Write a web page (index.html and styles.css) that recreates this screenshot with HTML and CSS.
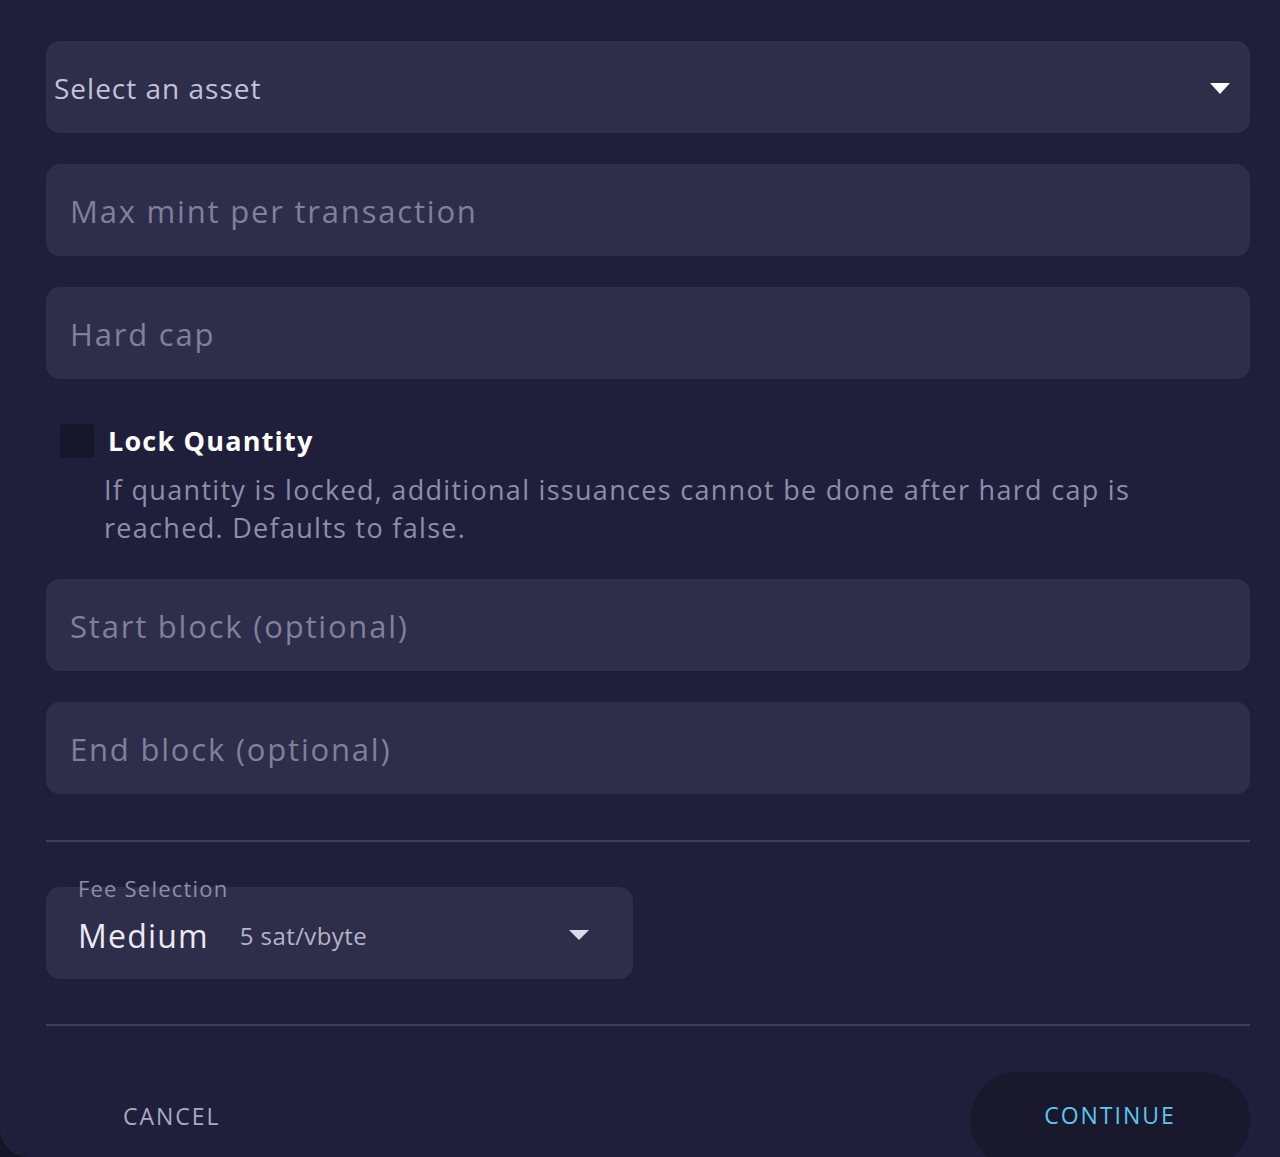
FILE: index.html
```html
<!DOCTYPE html>
<html>
<head>
<meta charset="utf-8">
<link rel="stylesheet" href="styles.css">
</head>
<body>
<div class="dialog">
  <div class="field select">
    <span class="select-text">Select an asset</span>
    <span class="caret"></span>
  </div>
  <div class="field"><span class="placeholder">Max mint per transaction</span></div>
  <div class="field"><span class="placeholder">Hard cap</span></div>
  <div class="lock">
    <div class="lock-row">
      <span class="checkbox"></span>
      <span class="lock-label">Lock Quantity</span>
    </div>
    <p class="lock-desc">If quantity is locked, additional issuances cannot be done after hard cap is reached. Defaults to false.</p>
  </div>
  <div class="field f4"><span class="placeholder">Start block (optional)</span></div>
  <div class="field"><span class="placeholder">End block (optional)</span></div>
  <hr class="divider first">
  <div class="fee">
    <span class="fee-label">Fee Selection</span>
    <div class="fee-box">
      <span class="fee-name">Medium</span>
      <span class="fee-rate">5 sat/vbyte</span>
      <span class="caret small"></span>
    </div>
  </div>
  <hr class="divider second">
  <div class="actions">
    <button class="btn cancel">CANCEL</button>
    <button class="btn continue">CONTINUE</button>
  </div>
</div>
</body>
</html>
```
FILE: styles.css
```css
html, body {
  margin: 0;
  padding: 0;
  background: #151428;
  height: 1157px;
  overflow: hidden;
}
.dialog {
  background: #201f3b;
  height: 1157px;
  box-sizing: border-box;
  padding: 41px 30px 0 46px;
  border-radius: 0 0 0 28px;
  font-family: "Open Sans", "Liberation Sans", sans-serif;
  display: flex;
  flex-direction: column;
}
.dialog > * {
  flex-shrink: 0;
}
.field {
  height: 92px;
  background: #2e2d4a;
  border-radius: 14px;
  display: flex;
  align-items: center;
  padding: 2px 24px 0;
  margin-bottom: 31px;
  box-sizing: border-box;
}
.field.select {
  padding: 2px 20px 0 8px;
  justify-content: space-between;
}
.select-text {
  color: #c3c2d8;
  font-size: 28px;
  letter-spacing: 1px;
}
.placeholder {
  color: #807f9c;
  font-size: 31px;
  letter-spacing: 1.8px;
}
.caret {
  width: 0;
  height: 0;
  border-left: 10px solid transparent;
  border-right: 10px solid transparent;
  border-top: 11px solid #ffffff;
}
.caret.small {
  border-left-width: 10px;
  border-right-width: 10px;
  border-top-width: 10px;
  border-top-color: #dcdbe8;
  margin-left: auto;
  margin-right: 44px;
}
.lock {
  margin-top: 12px;
  margin-bottom: 32px;
}
.lock-row {
  display: flex;
  align-items: center;
  padding-left: 14px;
}
.checkbox {
  width: 34px;
  height: 34px;
  background: #17162b;
  border-radius: 3px;
}
.lock-label {
  color: #ffffff;
  font-weight: 700;
  font-size: 27px;
  margin-left: 14px;
  letter-spacing: 1.2px;
}
.lock-desc {
  margin: 12px 0 0 58px;
  color: #8e8daa;
  font-size: 27px;
  line-height: 38px;
  letter-spacing: 1.3px;
  max-width: 1090px;
}
.divider {
  border: 0;
  height: 2px;
  background: #3f3e58;
  margin: 0;
}
.divider.first {
  margin-top: 15px;
}
.fee {
  position: relative;
  margin-top: 45px;
  width: 587px;
}
.fee-label {
  position: absolute;
  left: 32px;
  top: -13px;
  color: #8f8ea8;
  font-size: 22px;
  letter-spacing: 1.2px;
  line-height: 28px;
}
.fee-box {
  height: 92px;
  background: #2e2d4a;
  border-radius: 14px;
  display: flex;
  align-items: center;
  padding: 4px 0 0 32px;
  box-sizing: border-box;
}
.fee-name {
  color: #ebeaf5;
  font-size: 32px;
  letter-spacing: 1.2px;
}
.fee-rate {
  color: #b5b4c9;
  font-size: 24px;
  margin-left: 31px;
  letter-spacing: 0.4px;
}
.divider.second {
  margin-top: 45px;
}
.actions {
  display: flex;
  justify-content: space-between;
  align-items: flex-start;
  margin-top: 46px;
}
.btn {
  border: 0;
  background: transparent;
  font-family: "Open Sans", "Liberation Sans", sans-serif;
  font-size: 23px;
  letter-spacing: 2px;
  cursor: pointer;
}
.cancel {
  color: #a9a8c2;
  margin-left: 77px;
  margin-top: 28px;
  padding: 0;
}
.continue {
  color: #5ec6ef;
  background: #19182d;
  width: 280px;
  height: 96px;
  border-radius: 48px;
  padding: 0 0 10px 0;
}
```
